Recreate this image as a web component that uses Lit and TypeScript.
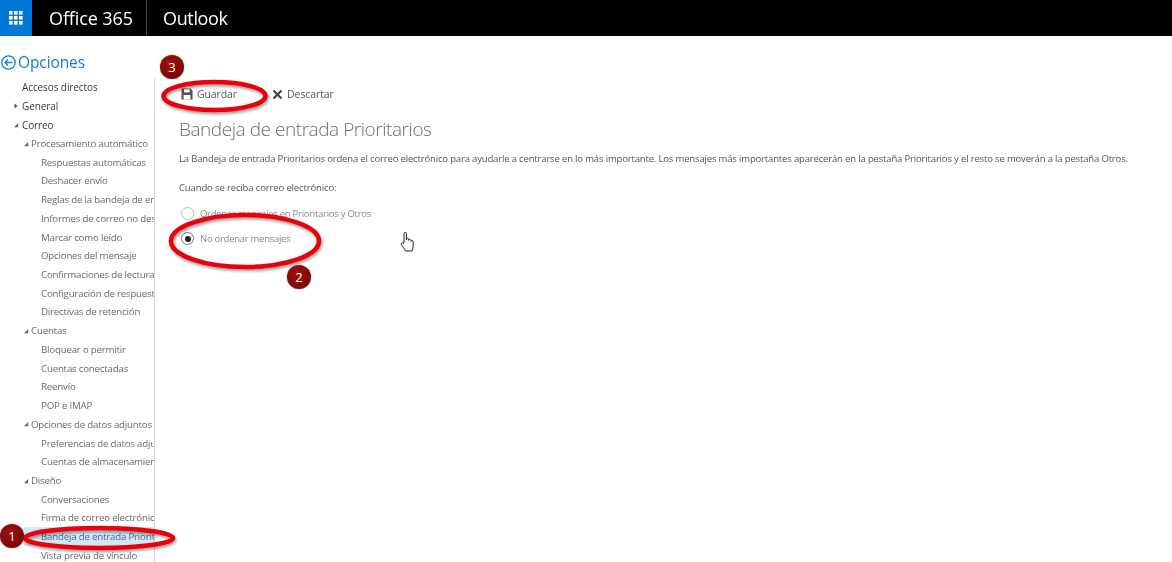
import { LitElement, html, css, svg } from "lit";
import { customElement } from "lit/decorators.js";

type Row = { t: string; l: 0 | 1 | 2; a?: "r" | "d"; dark?: boolean; sel?: boolean };
const rows: Row[] = [
  { t: "Accesos directos", l: 0, dark: true },
  { t: "General", l: 0, a: "r", dark: true },
  { t: "Correo", l: 0, a: "d", dark: true },
  { t: "Procesamiento automático", l: 1, a: "d" },
  { t: "Respuestas automáticas", l: 2 },
  { t: "Deshacer envío", l: 2 },
  { t: "Reglas de la bandeja de entrada", l: 2 },
  { t: "Informes de correo no deseado", l: 2 },
  { t: "Marcar como leído", l: 2 },
  { t: "Opciones del mensaje", l: 2 },
  { t: "Confirmaciones de lectura", l: 2 },
  { t: "Configuración de respuesta", l: 2 },
  { t: "Directivas de retención", l: 2 },
  { t: "Cuentas", l: 1, a: "d" },
  { t: "Bloquear o permitir", l: 2 },
  { t: "Cuentas conectadas", l: 2 },
  { t: "Reenvío", l: 2 },
  { t: "POP e IMAP", l: 2 },
  { t: "Opciones de datos adjuntos", l: 1, a: "d" },
  { t: "Preferencias de datos adjuntos", l: 2 },
  { t: "Cuentas de almacenamiento", l: 2 },
  { t: "Diseño", l: 1, a: "d" },
  { t: "Conversaciones", l: 2 },
  { t: "Firma de correo electrónico", l: 2 },
  { t: "Bandeja de entrada Prioritarios", l: 2, sel: true },
  { t: "Vista previa de vínculo", l: 2 },
];

@customElement("app-root")
export class AppRoot extends LitElement {
  static styles = css`
    :host {
      display: block;
      position: relative;
      width: 1172px;
      height: 562px;
      overflow: hidden;
      background: #fff;
      font-family: "Open Sans", "Noto Sans", sans-serif;
      color: #555;
    }
    .page { filter: blur(0.35px); }
    .top { display: flex; align-items: center; height: 36px; background: #000; color: #fff; }
    .waffle { width: 32px; height: 36px; background: #0078d7; display: flex; align-items: center; justify-content: center; flex: none; }
    .brand { font-size: 18px; line-height: 36px; margin-left: 17px; width: 97px; white-space: nowrap; letter-spacing: -0.1px; }
    .sep { width: 1px; height: 36px; background: #444; flex: none; }
    .app { font-size: 18px; line-height: 36px; margin-left: 16px; letter-spacing: -0.35px; }
    .body { display: flex; height: 526px; }
    .side { width: 155px; flex: none; display: flex; flex-direction: column; overflow: hidden; }
    .opts { height: 42px; display: flex; align-items: center; gap: 2px; padding: 10px 0 0 1px; box-sizing: border-box; color: #1a7cc8; font-size: 15.5px; letter-spacing: -0.1px; }
    .nav { flex: 1; border-right: 1px solid #d8d8d8; overflow: hidden; }
    .row { height: 18.72px; display: flex; align-items: center; font-size: 9.7px; white-space: nowrap; position: relative; color: #6a6a6a; letter-spacing: -0.2px; }
    .row.dark { color: #3a3a3a; font-size: 10px; letter-spacing: -0.1px; }
    .row.l0 { padding-left: 22px; }
    .row.l1 { padding-left: 31px; }
    .row.l2 { padding-left: 41px; }
    .row.sel { background: linear-gradient(90deg, #fff 0 24px, #d3e8f6 24px); color: #4a6a86; }
    .arr { position: absolute; top: 6.5px; width: 6px; height: 6px; }
    .l0 .arr { left: 13px; }
    .l1 .arr { left: 23px; }
    .main { flex: 1; padding: 48px 0 0 24px; min-width: 0; }
    .actions { display: flex; align-items: center; height: 20px; margin-left: 2px; font-size: 10.5px; color: #555; letter-spacing: -0.1px; }
    .act { display: flex; align-items: center; gap: 4px; }
    .act + .act { margin-left: 35px; }
    h1 { margin: 11px 0 0; font-weight: 300; font-size: 19px; line-height: 28px; color: #6e6e6e; letter-spacing: -0.45px; }
    .desc { margin: 9px 0 0; font-size: 9.5px; line-height: 14px; color: #555; white-space: nowrap; letter-spacing: -0.16px; }
    .when { margin: 15px 0 0; font-size: 9.5px; line-height: 14px; color: #555; letter-spacing: -0.13px; }
    .radio { display: flex; align-items: center; gap: 6px; height: 25px; margin-top: 6px; font-size: 9.5px; color: #888; padding-left: 2px; letter-spacing: -0.27px; }
    .radio + .radio { margin-top: 0; }
    .circ { width: 13px; height: 13px; box-sizing: border-box; border-radius: 50%; border: 1px solid #bbb; display: flex; align-items: center; justify-content: center; flex: none; }
    .circ.on { border-color: #777; }
    .circ.on i { width: 6px; height: 6px; border-radius: 50%; background: #222; display: block; }
    .overlay { position: absolute; left: 0; top: 0; pointer-events: none; }
    .badge { position: absolute; width: 24px; height: 24px; border-radius: 50%; background: radial-gradient(circle at 40% 35%, #9c1010, #730404); color: #fff; font-size: 13px; display: flex; align-items: center; justify-content: center; box-shadow: 0 0 1px #500; }
    .b1 { left: 0; top: 524px; }
    .b2 { left: 287px; top: 265px; }
    .b3 { left: 160px; top: 55px; }
    .cursor { position: absolute; left: 399px; top: 231px; }
  `;

  private arrow(a: "r" | "d") {
    return a === "r"
      ? html`<svg class="arr" viewBox="0 0 6 6"><path d="M1.5 0.5 L4.5 3 L1.5 5.5Z" fill="#555"/></svg>`
      : html`<svg class="arr" viewBox="0 0 6 6"><path d="M5.2 1 V5.2 H1Z" fill="#666"/></svg>`;
  }

  render() {
    const dots = [0, 1, 2].flatMap((y) => [0, 1, 2].map((x) => svg`<rect x=${x * 5} y=${y * 5} width="3.6" height="3.6" fill="#fff"/>`));
    return html`
      <div class="page">
      <div class="top">
        <div class="waffle"><svg width="14" height="14" viewBox="0 0 14 14">${dots}</svg></div>
        <div class="brand">Office 365</div>
        <div class="sep"></div>
        <div class="app">Outlook</div>
      </div>
      <div class="body">
        <div class="side">
          <div class="opts">
            <svg width="15" height="15" viewBox="0 0 15 15" fill="none" stroke="#1a7cc8" stroke-width="1.3">
              <circle cx="7.5" cy="7.5" r="6.7"/>
              <path d="M11.5 7.5H4M7 4.5L4 7.5L7 10.5"/>
            </svg>
            <span>Opciones</span>
          </div>
          <div class="nav">
            ${rows.map(
              (r) => html`<div class="row l${r.l} ${r.dark ? "dark" : ""} ${r.sel ? "sel" : ""}">
                ${r.a ? this.arrow(r.a) : ""}<span>${r.t}</span>
              </div>`
            )}
          </div>
        </div>
        <div class="main">
          <div class="actions">
            <div class="act">
              <svg width="12" height="12" viewBox="0 0 12 12">
                <path d="M0.5 0.5H9.5L11.5 2.5V11.5H0.5Z" fill="#555"/>
                <rect x="3" y="1.2" width="5.6" height="3.2" fill="#fff"/>
                <rect x="2.6" y="7" width="6.8" height="4.5" fill="#fff"/>
              </svg>
              <span>Guardar</span>
            </div>
            <div class="act">
              <svg width="11" height="11" viewBox="0 0 11 11" stroke="#444" stroke-width="2.2" fill="none">
                <path d="M1.5 1.5L9.5 9.5M9.5 1.5L1.5 9.5"/>
              </svg>
              <span>Descartar</span>
            </div>
          </div>
          <h1>Bandeja de entrada Prioritarios</h1>
          <p class="desc">La Bandeja de entrada Prioritarios ordena el correo electrónico para ayudarle a centrarse en lo más importante. Los mensajes más importantes aparecerán en la pestaña Prioritarios y el resto se moverán a la pestaña Otros.</p>
          <p class="when">Cuando se reciba correo electrónico:</p>
          <div class="radio"><span class="circ"></span><span>Ordenar mensajes en Prioritarios y Otros</span></div>
          <div class="radio"><span class="circ on"><i></i></span><span>No ordenar mensajes</span></div>
        </div>
      </div>
      </div>

      <svg class="overlay" width="1172" height="562" viewBox="0 0 1172 562" fill="none">
        <defs>
          <filter id="sh" x="-10%" y="-30%" width="120%" height="170%">
            <feDropShadow dx="1" dy="2" stdDeviation="1.5" flood-color="#000" flood-opacity="0.4"/>
          </filter>
        </defs>
        <g stroke="#e8060f" stroke-width="4.6" filter="url(#sh)">
          <ellipse cx="214.5" cy="96" rx="51" ry="14"/>
          <ellipse cx="245" cy="241" rx="74" ry="26"/>
          <ellipse cx="99" cy="538" rx="74" ry="10"/>
        </g>
      </svg>
      <div class="badge b1">1</div>
      <div class="badge b2">2</div>
      <div class="badge b3">3</div>
      <svg class="cursor" width="18" height="22" viewBox="0 0 18 22" fill="#fff" stroke="#222" stroke-width="1" stroke-linejoin="round">
        <path d="M5 11V2.5C5 1 7.4 1 7.4 2.5V9L7.5 8C7.5 7 9.7 7 9.7 8.2V9.3C9.7 8.2 12 8.2 12 9.6V10.3C12 9.4 14.2 9.4 14.2 10.8V15C14.2 17 13.4 18 13 20H6.5C6 18.5 3.8 16 2.5 13.8C1.6 12 3.5 11 4.6 12.5Z"/>
      </svg>
    `;
  }
}
